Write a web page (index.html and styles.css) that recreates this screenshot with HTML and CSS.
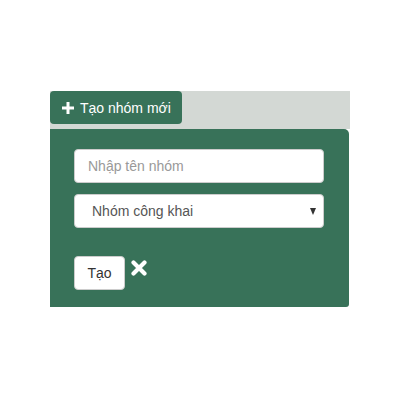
FILE: index.html
```html
<!DOCTYPE html>
<html lang="vi">
<head>
<meta charset="utf-8">
<link rel="stylesheet" href="styles.css">
</head>
<body>
<div class="wrap">
  <div class="bar">
    <button class="tab">
      <svg class="plus" width="12" height="12" viewBox="0 0 12 12"><path d="M4.5 0h3v4.5H12v3H7.5V12h-3V7.5H0v-3h4.5z" fill="#fff"/></svg>
      <span>Tạo nhóm mới</span>
    </button>
  </div>
  <div class="panel">
    <input class="field" type="text" placeholder="Nhập tên nhóm">
    <div class="select">
      <span>Nhóm công khai</span>
      <span class="caret"></span>
    </div>
    <div class="actions">
      <button class="create">Tạo</button>
      <svg class="close" width="16" height="16" viewBox="0 0 16 16"><path d="M2.5 2.5L13.5 13.5M13.5 2.5L2.5 13.5" stroke="#fff" stroke-width="4.2" stroke-linecap="round"/></svg>
    </div>
  </div>
</div>
</body>
</html>
```
FILE: styles.css
```css
html, body { margin: 0; padding: 0; background: #fff; }
body { font-family: "Liberation Sans", Arial, sans-serif; font-size: 14px; }
.wrap { padding: 91px 0 0 50px; width: 300px; }
.bar { background: #d3d8d4; height: 38px; width: 300px; }
.tab {
  display: flex; align-items: center; gap: 6px;
  height: 33px; width: 132px; padding: 0 0 0 12px; box-sizing: border-box;
  background: #387259; color: #fff; border: 0; border-radius: 4px;
  font-family: inherit; font-size: 14px;
}
.plus { display: block; margin-top: 1px; }
.panel {
  background: #387259; width: 299px; height: 178px; box-sizing: border-box;
  padding: 20px 25px 0 24px; border-radius: 0 5px 3px 0;
}
.field {
  display: block; width: 250px; height: 34px; box-sizing: border-box;
  border: 1px solid #ccc; border-radius: 4px; padding: 0 13px;
  font-family: inherit; font-size: 14px; color: #555; background: #fff; outline: none;
}
.field::placeholder { color: #999; }
.select {
  margin-top: 11px; width: 250px; height: 34px; box-sizing: border-box;
  border: 1px solid #ccc; border-radius: 4px; background: #fff;
  display: flex; align-items: center; justify-content: space-between;
  padding: 0 7px 0 17px; color: #555; font-size: 14px;
}
.caret {
  width: 0; height: 0; border-left: 3.5px solid transparent; border-right: 3.5px solid transparent;
  border-top: 7px solid #333; margin-top: 1px;
}
.actions { margin-top: 28px; display: flex; align-items: flex-start; gap: 6px; }
.create {
  width: 51px; height: 34px; box-sizing: border-box; background: #fff; color: #333;
  border: 1px solid #ccc; border-radius: 4px; font-family: inherit; font-size: 14px; padding: 0;
}
.close { display: block; margin-top: 4px; }
```
